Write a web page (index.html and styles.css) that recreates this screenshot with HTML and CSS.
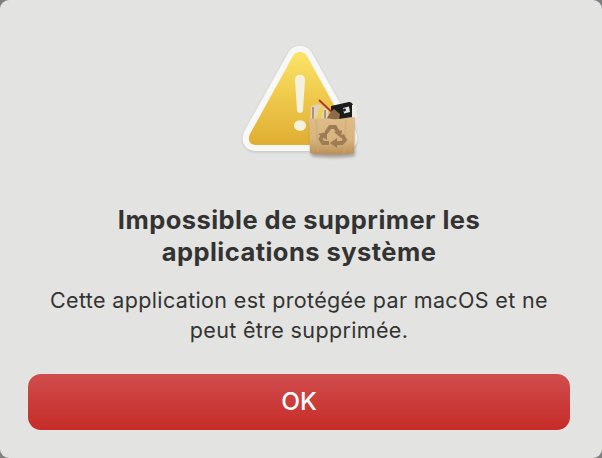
FILE: index.html

```html
<!DOCTYPE html>
<html lang="fr">
<head>
  <meta charset="UTF-8">
  <title>Impossible de supprimer les applications système</title>
  <link rel="stylesheet" href="styles.css">
</head>
<body>
  <div class="dialog">
    <svg class="icon" width="150" height="140" viewBox="226 30 150 140" aria-hidden="true">
      <defs>
        <linearGradient id="yellow" x1="0" y1="0" x2="0" y2="1">
          <stop offset="0" stop-color="#fbe469"/>
          <stop offset="0.5" stop-color="#eec84a"/>
          <stop offset="1" stop-color="#dfae33"/>
        </linearGradient>
        <linearGradient id="bag" x1="0" y1="0" x2="0" y2="1">
          <stop offset="0" stop-color="#dfbd89"/>
          <stop offset="0.6" stop-color="#d8b47d"/>
          <stop offset="1" stop-color="#b98f59"/>
        </linearGradient>
        <filter id="blur" x="-20%" y="-20%" width="140%" height="140%">
          <feGaussianBlur stdDeviation="1.5"/>
        </filter>
        <filter id="soft" x="-10%" y="-10%" width="120%" height="120%">
          <feGaussianBlur stdDeviation="0.45"/>
        </filter>
      </defs>
      <!-- triangle: white rim, then yellow -->
      <path d="M300 47 C305 47 309 49 312 54 L355 131 C361 142 355 152 344 152 L256 152 C245 152 239 142 245 131 L288 54 C291 49 295 47 300 47 Z" fill="#000" opacity="0.14" filter="url(#blur)"/>
      <path d="M300 46 C305 46 309 48 312 53 L355 130 C361 141 355 151 344 151 L256 151 C245 151 239 141 245 130 L288 53 C291 48 295 46 300 46 Z" fill="#f8f8f6"/>
      <path d="M300 52 C303 52 305 53 307 56 L350 134 C353 140 350 145 344 145 L256 145 C250 145 247 140 250 134 L293 56 C295 53 297 52 300 52 Z" fill="url(#yellow)"/>
      <!-- exclamation mark -->
      <path d="M300 75 C296.5 75 295 77 295 80 L297 110 C297 112 298.5 113 300 113 C301.5 113 303 112 303 110 L305 80 C305 77 303.5 75 300 75 Z" fill="#f5f1df" filter="url(#soft)"/>
      <ellipse cx="300" cy="125.5" rx="6" ry="5.2" fill="#f5f1df" filter="url(#soft)"/>
      <!-- bag contents -->
      <g filter="url(#soft)">
        <path d="M311 106 L319 104 L328 110 L328 120 L310 120 Z" fill="#e3d2ba"/>
        <path d="M313 107 L313 119 M325 110 L325 119" stroke="#8f6a4a" stroke-width="1.2"/>
        <path d="M331 106 L349 102 C351 102 352 103 352.5 104 L356 114 L353 120 L331 120 Z" fill="#1b1b1d"/>
        <path d="M352 105 L356 105 L357 118 L352 118 Z" fill="#efece5"/>
        <path d="M343 108 l6 -1.5 l1 5.5 l-6 1.5 Z" fill="#e4e4e4"/>
        <circle cx="344.5" cy="110" r="1.4" fill="#1b1b1d"/>
        <path d="M319 100 L337 117" stroke="#a8372a" stroke-width="1.8" fill="none"/>
        <path d="M320 107 L323.5 108 L320.5 120 L316 119 Z" fill="#efd04c"/>
        <path d="M326 120 L330 113 L334 109 L340 114 L339 120 Z" fill="#8d6a49"/>
      </g>
      <!-- bag -->
      <path d="M310 121 L354 121 L355 156 C345 158 320 158 311 156 Z" fill="#5e5142" opacity="0.45" filter="url(#blur)"/>
      <path d="M309 118 C316 120 325 117 332 119 C340 120 348 117 355 117 L354 153 C344 155 320 155 310 153 Z" fill="url(#bag)"/>
      <path d="M316 120 L318 152 M346 119 L344 153" stroke="#cda873" stroke-width="2" opacity="0.5" filter="url(#soft)"/>
      <!-- recycle mark -->
      <g fill="none" stroke="#9c7c55" stroke-width="3.8" filter="url(#soft)">
        <path d="M326 133 L330 127 L335 127 L338 132"/>
        <path d="M342 135 L345 140 L342 143 L336 143"/>
        <path d="M329 143 L323 143 L320.5 139 L323 135"/>
      </g>
      <g fill="#9c7c55" filter="url(#soft)">
        <path d="M334 132 L342 130 L341 138 Z"/>
        <path d="M337 138 L337 148 L330 143 Z"/>
        <path d="M318 134 L327 132 L327 140 Z"/>
      </g>
    </svg>
    <h1 class="title">Impossible de supprimer les<br>applications système</h1>
    <p class="message">Cette application est protégée par macOS et ne<br>peut être supprimée.</p>
    <button class="ok">OK</button>
  </div>
</body>
</html>
```

FILE: styles.css

```css
html {
  background-color: #808082;
}
body {
  margin: 0;
  height: 458px;
  overflow: hidden;
  background-color: #e3e3e1;
  border-radius: 9px;
  font-family: Inter, "Liberation Sans", sans-serif;
  color: #333333;
}
.dialog {
  display: flex;
  flex-direction: column;
  align-items: center;
  padding: 30px 32px 0 28px;
}
.icon {
  display: block;
  margin-left: 4px;
}
.title {
  margin: 34px 0 0 0;
  font-size: 25.5px;
  line-height: 32px;
  font-weight: 700;
  letter-spacing: 0.45px;
  text-align: center;
  white-space: nowrap;
}
.message {
  margin: 17px 0 0 0;
  font-size: 21.5px;
  line-height: 30px;
  font-weight: 400;
  letter-spacing: 0.35px;
  text-align: center;
  white-space: nowrap;
}
.ok {
  width: 542px;
  height: 56px;
  margin-top: 29px;
  padding: 0 0 3px 0;
  border: none;
  border-radius: 13px;
  background: linear-gradient(#d04d4d, #c62c28);
  color: #ffffff;
  font-family: inherit;
  font-size: 24.5px;
  font-weight: 500;
}
```
